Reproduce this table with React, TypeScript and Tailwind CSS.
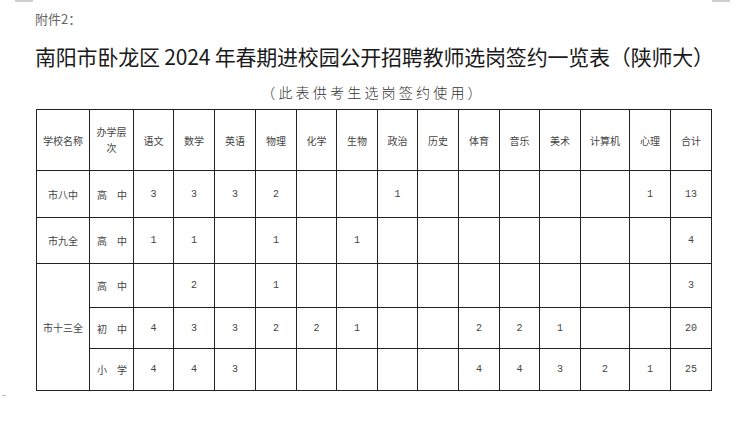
import React from "react";

const widths = [53, 44, 40, 41, 41, 41, 40, 41, 40, 41, 41, 40, 41, 49, 41, 41];
const headers = ["语文", "数学", "英语", "物理", "化学", "生物", "政治", "历史", "体育", "音乐", "美术", "计算机", "心理", "合计"];

type Row = { school?: string; span?: number; level: [string, string]; vals: string[]; h: string };

const rows: Row[] = [
  { school: "市八中", span: 1, level: ["高", "中"], vals: ["3", "3", "3", "2", "", "", "1", "", "", "", "", "", "1", "13"], h: "h-[47px]" },
  { school: "市九全", span: 1, level: ["高", "中"], vals: ["1", "1", "", "1", "", "1", "", "", "", "", "", "", "", "4"], h: "h-[46px]" },
  { school: "市十三全", span: 3, level: ["高", "中"], vals: ["", "2", "", "1", "", "", "", "", "", "", "", "", "", "3"], h: "h-[44px]" },
  { level: ["初", "中"], vals: ["4", "3", "3", "2", "2", "1", "", "", "2", "2", "1", "", "", "20"], h: "h-[41px]" },
  { level: ["小", "学"], vals: ["4", "4", "3", "", "", "", "", "", "4", "4", "3", "2", "1", "25"], h: "h-[42px]" },
];

const cell = "border border-[#222] text-center align-middle p-0";
const sans = { fontFamily: '"Noto Sans CJK SC", "Noto Sans", sans-serif' };

export default function App() {
  return (
    <div className="relative w-[740px] h-[430px] bg-white overflow-hidden" style={sans}>
      <div className="absolute left-[15px] top-0 w-[18px] h-[2px] bg-[#cfcfcf]" />
      <div className="absolute left-[712px] top-0 w-[18px] h-[2px] bg-[#cfcfcf]" />
      <div className="absolute left-[2px] top-[395px] w-[4px] h-[1px] bg-[#bbbbbb]" />
      <div className="pl-[35px]">
        <div className="mt-[10px] h-[18px] leading-[18px] text-[13px] text-[#666]">附件2：</div>
        <div className="mt-[14px] h-[28px] leading-[28px] text-[21px] text-[#1a1a1a] whitespace-nowrap tracking-[-0.2px]">
          南阳市卧龙区 2024 年春期进校园公开招聘教师选岗签约一览表（陕师大）
        </div>
        <div className="mt-[12px] h-[20px] leading-[20px] w-[676px] text-center text-[14px] text-[#333] tracking-[3.2px] font-light">
          （此表供考生选岗签约使用）
        </div>
        <table className="mt-[7px] ml-[1px] table-fixed border-collapse border-[1.5px] border-[#222] text-[10px] text-[#444]">
          <colgroup>
            {widths.map((w, i) => (
              <col key={i} style={{ width: w }} />
            ))}
          </colgroup>
          <tbody>
            <tr className="h-[61px]">
              <td className={cell}>学校名称</td>
              <td className={`${cell} leading-[16px]`}>
                办学层
                <br />次
              </td>
              {headers.map((h) => (
                <td key={h} className={cell}>
                  {h}
                </td>
              ))}
            </tr>
            {rows.map((r, i) => (
              <tr key={i} className={r.h}>
                {r.school && (
                  <td className={cell} rowSpan={r.span}>
                    {r.school}
                  </td>
                )}
                <td className={cell}>
                  <div className="flex justify-between pl-[7px] pr-[6px]">
                    <span>{r.level[0]}</span>
                    <span>{r.level[1]}</span>
                  </div>
                </td>
                {r.vals.map((v, j) => (
                  <td key={j} className={cell} style={{ fontFamily: '"Liberation Mono", monospace' }}>
                    {v}
                  </td>
                ))}
              </tr>
            ))}
          </tbody>
        </table>
      </div>
    </div>
  );
}
